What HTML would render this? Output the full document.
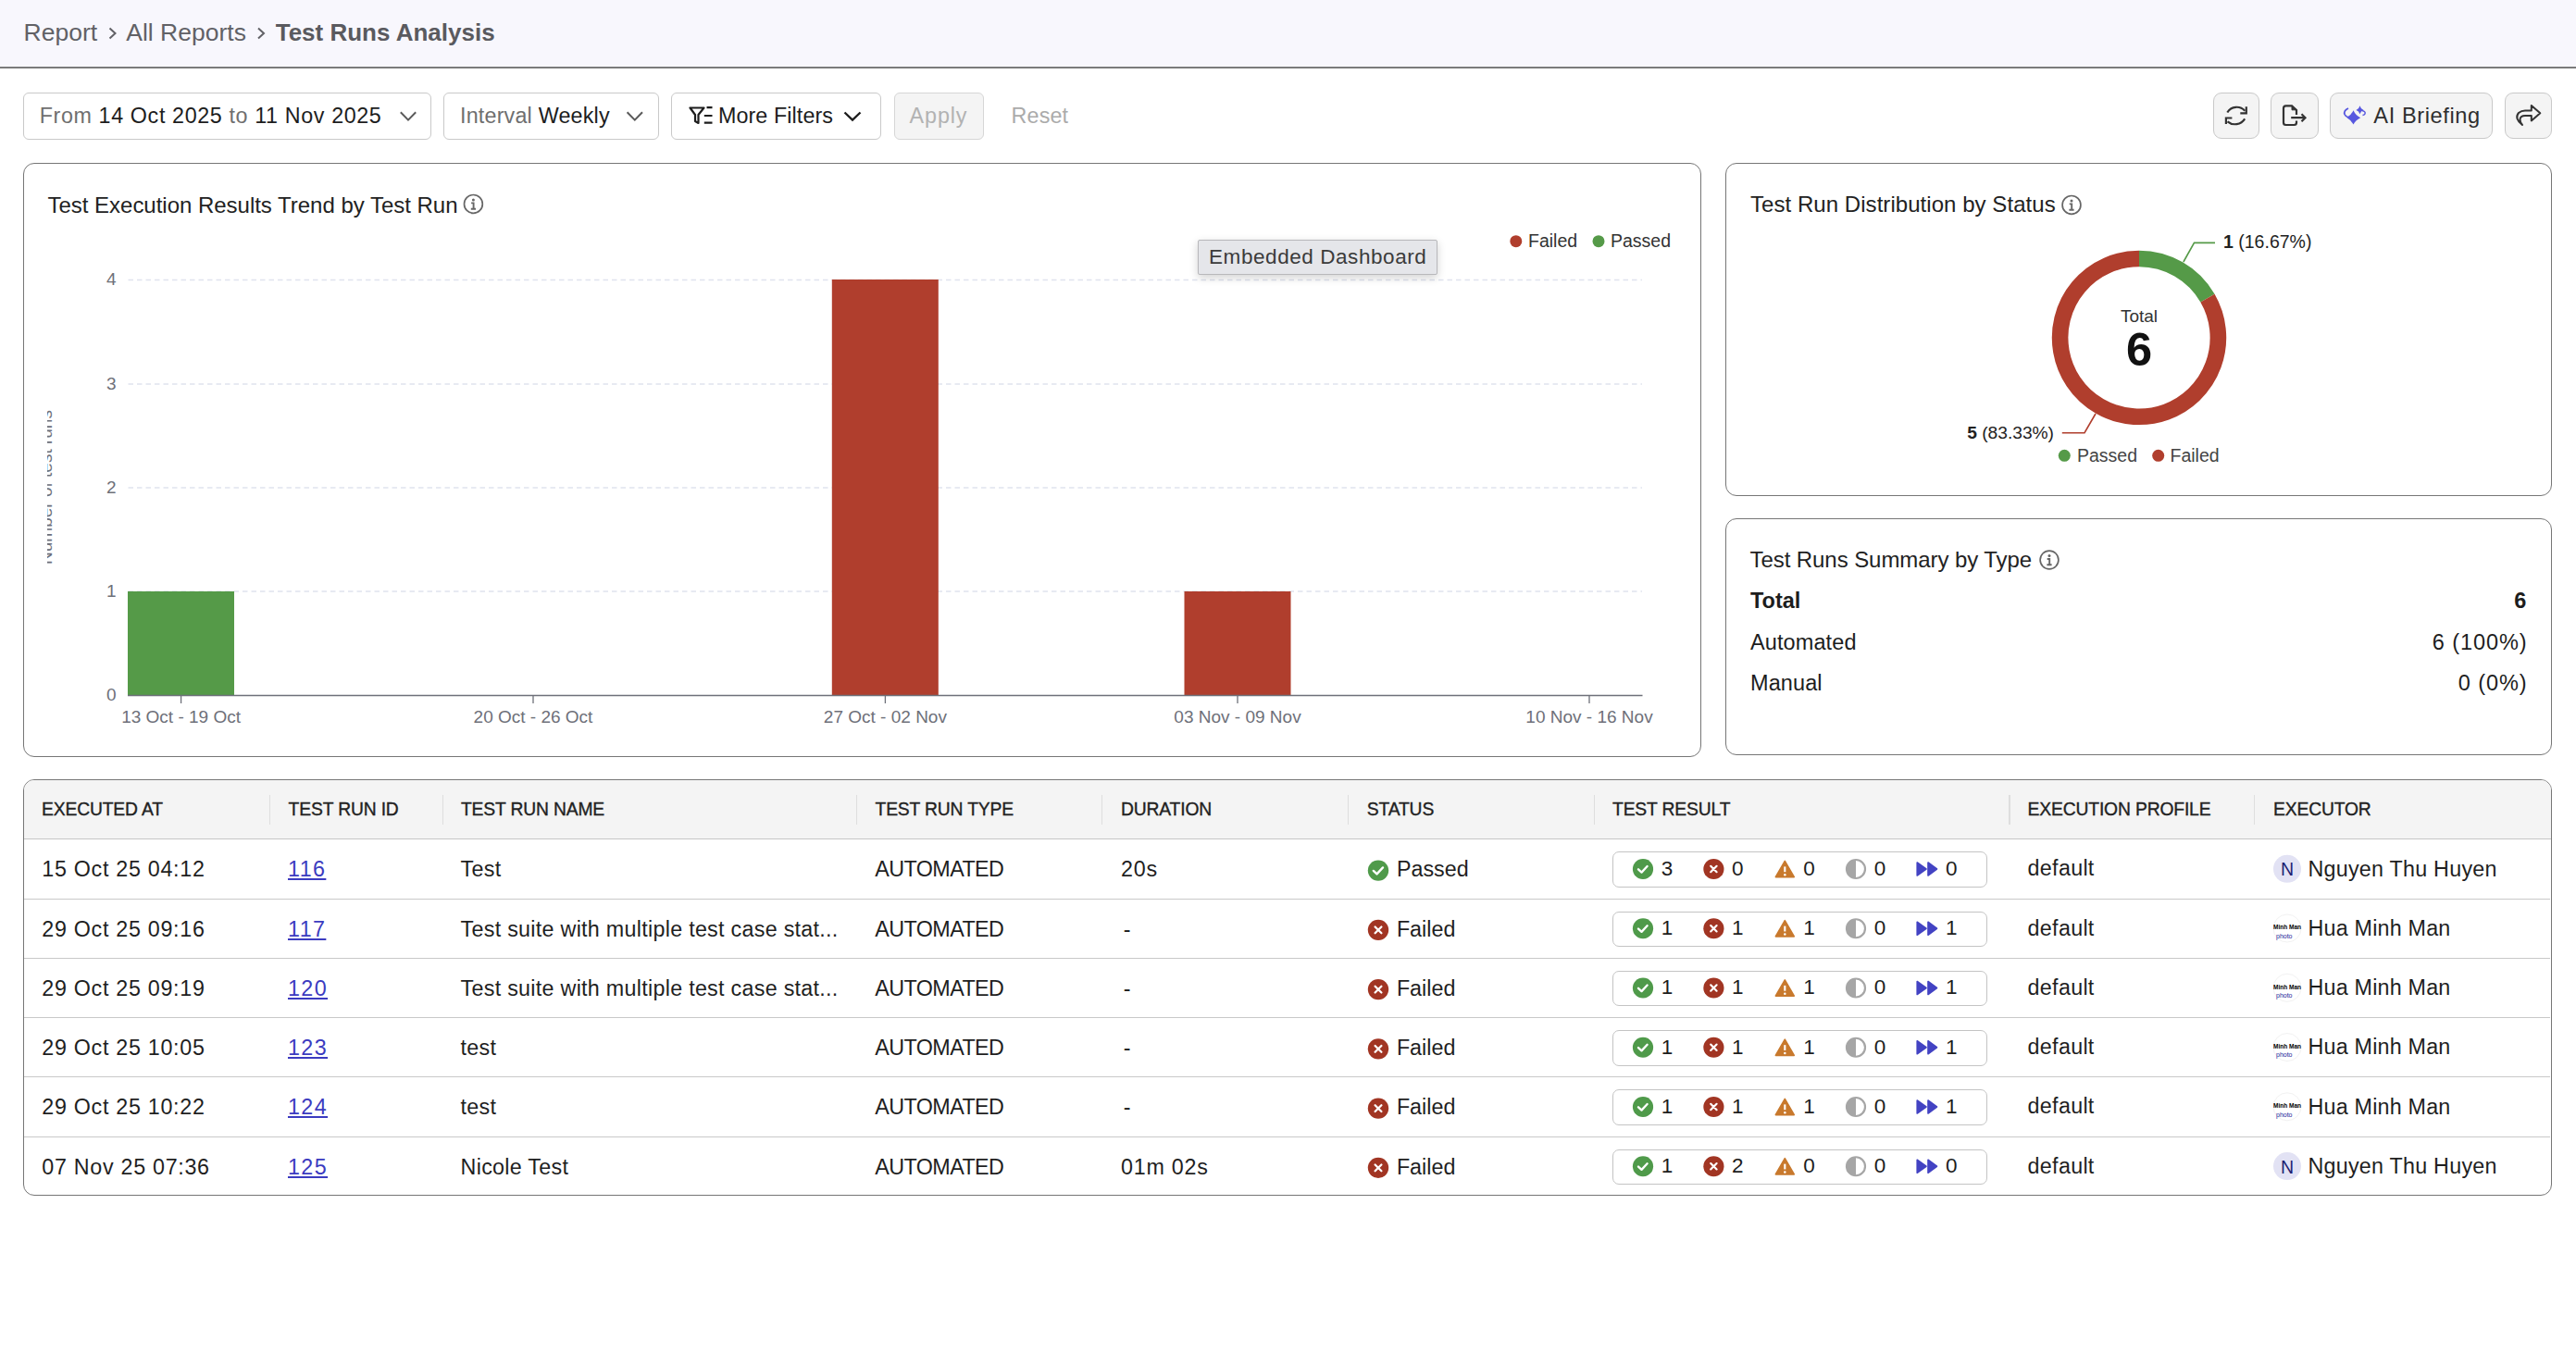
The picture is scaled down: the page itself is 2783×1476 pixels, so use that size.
<!DOCTYPE html>
<html><head><meta charset="utf-8"><title>Test Runs Analysis</title>
<style>
html,body{margin:0;padding:0;background:#fff;}
body{width:2783px;height:1476px;overflow:hidden;position:relative;font-family:"Liberation Sans",sans-serif;}
.t{position:absolute;white-space:nowrap;line-height:1;}
.b{position:absolute;box-sizing:border-box;}
svg.b{overflow:visible}
</style></head><body>
<div class="b" style="left:0;top:0;width:2783px;height:72px;background:#f8f7fd"></div>
<div class="b" style="left:0;top:72px;width:2783px;height:2px;background:#7b7b7b"></div>
<div class="t" style="left:25.60px;top:21.87px;font-size:26.5px;color:#616166;">Report</div>
<div class="t" style="left:136.30px;top:21.87px;font-size:26.5px;color:#616166;">All Reports</div>
<div class="t" style="left:297.70px;top:22.29px;font-size:26.0px;color:#5a5a5f;font-weight:700;">Test Runs Analysis</div>
<svg class="b" style="left:0;top:0" width="400" height="72"><polyline points="118.5,30.5 124.5,36 118.5,41.5" fill="none" stroke="#616166" stroke-width="2"/><polyline points="279,30.5 285,36 279,41.5" fill="none" stroke="#616166" stroke-width="2"/></svg>
<div class="b" style="left:25px;top:100px;width:441px;height:51px;background:#fff;border:1px solid #c9c9c9;border-radius:6px;"></div>
<div class="t" style="left:42.70px;top:113.98px;font-size:23.3px;color:#1d1d1d;letter-spacing:0.62px;"><span style="color:#6f6f6f">From</span> 14 Oct 2025 <span style="color:#6f6f6f">to</span> 11 Nov 2025</div>
<div class="b" style="left:479px;top:100px;width:233px;height:51px;background:#fff;border:1px solid #c9c9c9;border-radius:6px;"></div>
<div class="t" style="left:497.00px;top:113.98px;font-size:23.3px;color:#1d1d1d;letter-spacing:0.2px;"><span style="color:#6f6f6f">Interval</span> Weekly</div>
<div class="b" style="left:725px;top:100px;width:227px;height:51px;background:#fff;border:1px solid #c9c9c9;border-radius:6px;"></div>
<div class="t" style="left:775.90px;top:113.88px;font-size:23.3px;color:#1d1d1d;letter-spacing:0.1px;">More Filters</div>
<div class="b" style="left:966px;top:100px;width:97px;height:51px;background:#f4f4f4;border:1px solid #d6d6d6;border-radius:6px;"></div>
<div class="t" style="left:982.60px;top:113.98px;font-size:23.3px;color:#b2b2b2;letter-spacing:0.9px;">Apply</div>
<div class="t" style="left:1092.60px;top:113.98px;font-size:23.3px;color:#ababab;letter-spacing:0.15px;">Reset</div>
<svg class="b" style="left:0;top:90px" width="1000" height="70" viewBox="0 90 1000 70">
<polyline points="432.8,121.2 441,129.6 449.2,121.2" fill="none" stroke="#5a5a5a" stroke-width="2"/>
<polyline points="677.6,121.2 685.8,129.6 694,121.2" fill="none" stroke="#5a5a5a" stroke-width="2"/>
<polyline points="912.5,121.5 921,129.5 929.5,121.5" fill="none" stroke="#1d1d1d" stroke-width="2.4"/>
<path d="M745.5,116.5 L760.5,116.5 L754.5,124 L754.5,133 L751,131 L751,124 Z" fill="none" stroke="#1d1d1d" stroke-width="2.2" stroke-linejoin="round"/>
<path d="M763.5,116.2 H769.5 M760.8,125 H769.5 M760.8,132.6 H769.5" stroke="#1d1d1d" stroke-width="2.2"/>
</svg>
<div class="b" style="left:2391px;top:100px;width:50px;height:50px;background:#f4f4f4;border:1px solid #c9c9c9;border-radius:9px;"></div>
<div class="b" style="left:2453px;top:100px;width:52px;height:50px;background:#f4f4f4;border:1px solid #c9c9c9;border-radius:9px;"></div>
<div class="b" style="left:2517px;top:100px;width:176px;height:50px;background:#f4f4f4;border:1px solid #c9c9c9;border-radius:9px;"></div>
<div class="b" style="left:2706px;top:100px;width:51px;height:50px;background:#f4f4f4;border:1px solid #c9c9c9;border-radius:9px;"></div>
<div class="t" style="left:2564.30px;top:114.32px;font-size:23.6px;color:#2f2f2f;letter-spacing:0.6px;">AI Briefing</div>
<svg class="b" style="left:2380px;top:95px" width="400" height="60" viewBox="2380 95 400 60">
<path d="M2406.3,121.5 A11.8,11.8 0 0 1 2425.3,119.8" fill="none" stroke="#333" stroke-width="2.2"/>
<path d="M2426.8,115.3 V122.3 H2420.3" fill="none" stroke="#333" stroke-width="2.2"/>
<path d="M2425.2,128.3 A12.5,12.5 0 0 1 2406.5,131.3" fill="none" stroke="#333" stroke-width="2.2"/>
<path d="M2404.9,134 V127.5 H2411.4" fill="none" stroke="#333" stroke-width="2.2"/>
<path d="M2481,124 V119 L2476,114.3 H2469.5 Q2467,114.3 2467,117 V132.5 Q2467,135 2469.5,135 H2478.5 Q2481,135 2481,132.5 V130.5" fill="none" stroke="#333" stroke-width="2.2"/>
<path d="M2476,114.3 V118.8 H2481 Z" fill="#333" stroke="#333" stroke-width="1"/>
<path d="M2475.2,127.2 H2490 M2486.5,123.3 L2490.5,127.2 L2486.5,131.2" fill="none" stroke="#333" stroke-width="2.2"/>
<path d="M2542.5,119.3 Q2545,124.8 2550.2,127.3 Q2545,129.8 2542.5,134.6 Q2540,129.8 2535.3,127 Q2540,124.8 2542.5,119.3 Z" fill="#5757df"/>
<path d="M2549.5,114.3 Q2550.5,118 2553.5,119 Q2550.5,120 2549.5,123.3 Q2548.5,120 2545.5,119 Q2548.5,118 2549.5,114.3 Z" fill="#5757df"/>
<path d="M2537,117 Q2531.8,119.5 2533,123.5 Q2534,126 2537.5,127" fill="none" stroke="#5757df" stroke-width="1.8"/>
<path d="M2552,119.5 Q2556,120.5 2555,123 Q2554.5,124.3 2552.5,124.6" fill="none" stroke="#5757df" stroke-width="1.5"/>
<path d="M2725,135 Q2716,128 2721,122 Q2724,119.4 2728,119.4 H2734.8 V114 L2744.3,122.3 L2734.8,130.4 V125 H2728 Q2723,125 2722.5,129 Q2722.5,132 2725,135 Z" fill="none" stroke="#333" stroke-width="2" stroke-linejoin="round"/>
</svg>
<div class="b" style="left:25px;top:176px;width:1813px;height:642px;background:#fff;border:1px solid #767676;border-radius:12px;"></div>
<div class="b" style="left:1864px;top:176px;width:893px;height:360px;background:#fff;border:1px solid #767676;border-radius:12px;"></div>
<div class="b" style="left:1864px;top:560px;width:893px;height:256px;background:#fff;border:1px solid #767676;border-radius:12px;"></div>
<div class="t" style="left:51.50px;top:209.68px;font-size:24px;color:#222;letter-spacing:-0.02px;">Test Execution Results Trend by Test Run</div>
<div class="t" style="left:1891.00px;top:208.68px;font-size:24px;color:#222;letter-spacing:0.05px;">Test Run Distribution by Status</div>
<div class="t" style="left:1890.50px;top:593.18px;font-size:24px;color:#222;letter-spacing:-0.07px;">Test Runs Summary by Type</div>
<svg class="b" style="left:0;top:0" width="2783" height="840" viewBox="0 0 2783 840"><circle cx="511.4" cy="220.4" r="9.9" fill="none" stroke="#666" stroke-width="1.7"/><circle cx="511.4" cy="216.0" r="1.5" fill="#666"/><path d="M509.09999999999997,219.4 H511.59999999999997 V225.6 M508.79999999999995,225.70000000000002 H514.0" fill="none" stroke="#666" stroke-width="1.9"/><circle cx="2238" cy="221.4" r="9.9" fill="none" stroke="#666" stroke-width="1.7"/><circle cx="2238" cy="217.0" r="1.5" fill="#666"/><path d="M2235.7,220.4 H2238.2 V226.6 M2235.4,226.70000000000002 H2240.6" fill="none" stroke="#666" stroke-width="1.9"/><circle cx="2214" cy="605" r="9.9" fill="none" stroke="#666" stroke-width="1.7"/><circle cx="2214" cy="600.6" r="1.5" fill="#666"/><path d="M2211.7,604 H2214.2 V610.2 M2211.4,610.3 H2216.6" fill="none" stroke="#666" stroke-width="1.9"/><line x1="138.5" y1="302.5" x2="1774" y2="302.5" stroke="#e0e3ee" stroke-width="1.3" stroke-dasharray="5.5,4"/><line x1="138.5" y1="415" x2="1774" y2="415" stroke="#e0e3ee" stroke-width="1.3" stroke-dasharray="5.5,4"/><line x1="138.5" y1="527" x2="1774" y2="527" stroke="#e0e3ee" stroke-width="1.3" stroke-dasharray="5.5,4"/><line x1="138.5" y1="639" x2="1774" y2="639" stroke="#e0e3ee" stroke-width="1.3" stroke-dasharray="5.5,4"/><text x="125.5" y="308.3" text-anchor="end" font-size="19" fill="#6e7079">4</text><text x="125.5" y="420.8" text-anchor="end" font-size="19" fill="#6e7079">3</text><text x="125.5" y="532.8" text-anchor="end" font-size="19" fill="#6e7079">2</text><text x="125.5" y="644.8" text-anchor="end" font-size="19" fill="#6e7079">1</text><text x="125.5" y="757.3" text-anchor="end" font-size="19" fill="#6e7079">0</text><rect x="138" y="639" width="115" height="112.5" fill="#559a48"/><rect x="898.8" y="302" width="115" height="449.5" fill="#b03e2d"/><rect x="1279.5" y="639" width="115" height="112.5" fill="#b03e2d"/><line x1="138" y1="751.5" x2="1774.5" y2="751.5" stroke="#6e7079" stroke-width="1.6"/><line x1="195.6" y1="751" x2="195.6" y2="760" stroke="#6e7079" stroke-width="1.3"/><text x="195.6" y="780.8" text-anchor="middle" font-size="19" fill="#6e7079">13 Oct - 19 Oct</text><line x1="576" y1="751" x2="576" y2="760" stroke="#6e7079" stroke-width="1.3"/><text x="576" y="780.8" text-anchor="middle" font-size="19" fill="#6e7079">20 Oct - 26 Oct</text><line x1="956.4" y1="751" x2="956.4" y2="760" stroke="#6e7079" stroke-width="1.3"/><text x="956.4" y="780.8" text-anchor="middle" font-size="19" fill="#6e7079">27 Oct - 02 Nov</text><line x1="1337" y1="751" x2="1337" y2="760" stroke="#6e7079" stroke-width="1.3"/><text x="1337" y="780.8" text-anchor="middle" font-size="19" fill="#6e7079">03 Nov - 09 Nov</text><line x1="1717" y1="751" x2="1717" y2="760" stroke="#6e7079" stroke-width="1.3"/><text x="1717" y="780.8" text-anchor="middle" font-size="19" fill="#6e7079">10 Nov - 16 Nov</text><circle cx="1637.8" cy="260.7" r="6.5" fill="#b03e2d"/><text x="1651" y="267" font-size="19.5" fill="#333">Failed</text><circle cx="1727" cy="260.7" r="6.5" fill="#559a48"/><text x="1740" y="267" font-size="19.5" fill="#333">Passed</text></svg>
<div class="b" style="left:50.5px;top:420px;width:30px;height:220px;overflow:hidden"><div style="position:absolute;left:-87px;top:96.8px;width:170px;height:19px;line-height:19px;font-size:19px;color:#6e7079;white-space:nowrap;text-align:center;transform:rotate(-90deg)">Number of test runs</div></div>
<div class="b" style="left:1294px;top:259px;width:259px;height:38px;background:#e5e6ea;border:1px solid #b8b8bb;border-radius:2px;box-shadow:0 3px 10px rgba(0,0,0,0.18)"></div>
<div class="t" style="left:1306.00px;top:267.45px;font-size:22.5px;color:#3b3b3b;letter-spacing:0.57px;">Embedded Dashboard</div>
<svg class="b" style="left:1864px;top:176px" width="893" height="360" viewBox="1864 176 893 360"><path d="M2311.00,279.50 A85.4,85.4 0 0 1 2384.96,322.20" fill="none" stroke="#559a48" stroke-width="17.6"/><path d="M2384.96,322.20 A85.4,85.4 0 1 1 2311.00,279.50" fill="none" stroke="#b03e2d" stroke-width="17.6"/><polyline points="2358.9,283 2370.5,262.4 2393,262.4" fill="none" stroke="#559a48" stroke-width="1.6"/><polyline points="2264,447 2252,467.7 2227.8,467.7" fill="none" stroke="#b03e2d" stroke-width="1.6"/><text x="2402" y="268" font-size="19.5" fill="#222"><tspan font-weight="700">1</tspan> (16.67%)</text><text x="2219" y="474" font-size="19.2" fill="#222" text-anchor="end"><tspan font-weight="700">5</tspan> (83.33%)</text><text x="2311" y="348" font-size="19" fill="#333" text-anchor="middle">Total</text><text x="2311" y="394.6" font-size="50.5" font-weight="700" fill="#111" text-anchor="middle">6</text><circle cx="2230.3" cy="492.3" r="6.5" fill="#559a48"/><text x="2244" y="499" font-size="19.5" fill="#444">Passed</text><circle cx="2331.7" cy="492.3" r="6.5" fill="#b03e2d"/><text x="2344.5" y="499" font-size="19.5" fill="#444">Failed</text></svg>
<div class="t" style="left:1891.00px;top:637.71px;font-size:23.5px;color:#1d1d1d;font-weight:700;">Total</div>
<div class="t" style="right:53.60px;top:637.71px;font-size:23.5px;color:#1d1d1d;font-weight:700;">6</div>
<div class="t" style="left:1891.00px;top:682.71px;font-size:23.5px;color:#1d1d1d;letter-spacing:0.1px;">Automated</div>
<div class="t" style="right:52.60px;top:682.71px;font-size:23.5px;color:#1d1d1d;letter-spacing:0.9px;">6 (100%)</div>
<div class="t" style="left:1891.00px;top:726.91px;font-size:23.5px;color:#1d1d1d;letter-spacing:0.1px;">Manual</div>
<div class="t" style="right:52.60px;top:726.91px;font-size:23.5px;color:#1d1d1d;letter-spacing:0.9px;">0 (0%)</div>
<div class="b" style="left:25px;top:842px;width:2732px;height:450px;border:1px solid #767676;border-radius:12px;overflow:hidden;background:#fff"><div style="position:absolute;left:0;top:0;right:0;height:63px;background:#f4f4f4;border-bottom:1px solid #c6c6c6"></div></div>
<div class="b" style="left:291.2px;top:858.5px;width:1.3px;height:32px;background:#dedede"></div>
<div class="b" style="left:477.5px;top:858.5px;width:1.3px;height:32px;background:#dedede"></div>
<div class="b" style="left:925.2px;top:858.5px;width:1.3px;height:32px;background:#dedede"></div>
<div class="b" style="left:1190.2px;top:858.5px;width:1.3px;height:32px;background:#dedede"></div>
<div class="b" style="left:1456.2px;top:858.5px;width:1.3px;height:32px;background:#dedede"></div>
<div class="b" style="left:1722.0px;top:858.5px;width:1.3px;height:32px;background:#dedede"></div>
<div class="b" style="left:2170.4px;top:858.5px;width:1.3px;height:32px;background:#dedede"></div>
<div class="b" style="left:2435.2px;top:858.5px;width:1.3px;height:32px;background:#dedede"></div>
<div class="t" style="left:45.00px;top:865.26px;font-size:19.3px;color:#222;letter-spacing:-0.15px;-webkit-text-stroke:0.35px #222;">EXECUTED AT</div>
<div class="t" style="left:311.60px;top:865.26px;font-size:19.3px;color:#222;letter-spacing:-0.15px;-webkit-text-stroke:0.35px #222;">TEST RUN ID</div>
<div class="t" style="left:497.90px;top:865.26px;font-size:19.3px;color:#222;letter-spacing:-0.15px;-webkit-text-stroke:0.35px #222;">TEST RUN NAME</div>
<div class="t" style="left:945.50px;top:865.26px;font-size:19.3px;color:#222;letter-spacing:-0.15px;-webkit-text-stroke:0.35px #222;">TEST RUN TYPE</div>
<div class="t" style="left:1211.00px;top:865.26px;font-size:19.3px;color:#222;letter-spacing:-0.15px;-webkit-text-stroke:0.35px #222;">DURATION</div>
<div class="t" style="left:1476.80px;top:865.26px;font-size:19.3px;color:#222;letter-spacing:-0.15px;-webkit-text-stroke:0.35px #222;">STATUS</div>
<div class="t" style="left:1742.00px;top:865.26px;font-size:19.3px;color:#222;letter-spacing:-0.15px;-webkit-text-stroke:0.35px #222;">TEST RESULT</div>
<div class="t" style="left:2190.60px;top:865.26px;font-size:19.3px;color:#222;letter-spacing:-0.15px;-webkit-text-stroke:0.35px #222;">EXECUTION PROFILE</div>
<div class="t" style="left:2456.00px;top:865.26px;font-size:19.3px;color:#222;letter-spacing:-0.15px;-webkit-text-stroke:0.35px #222;">EXECUTOR</div>
<div class="b" style="left:26px;top:970.55px;width:2729px;height:1.2px;background:#c9c9c9"></div>
<div class="t" style="left:45.30px;top:928.28px;font-size:23.3px;color:#1f1f1f;letter-spacing:0.7px;">15 Oct 25 04:12</div>
<div class="t" style="left:311.00px;top:928.28px;font-size:23.3px;color:#3b3bc0;letter-spacing:1.4px;text-decoration:underline;text-underline-offset:1.5px;text-decoration-thickness:1.5px;">116</div>
<div class="t" style="left:497.60px;top:928.28px;font-size:23.3px;color:#1f1f1f;letter-spacing:0.28px;">Test</div>
<div class="t" style="left:945.20px;top:928.28px;font-size:23.3px;color:#1f1f1f;letter-spacing:-0.55px;">AUTOMATED</div>
<div class="t" style="left:1211.00px;top:928.28px;font-size:23.3px;color:#1f1f1f;letter-spacing:0.75px;">20s</div>
<div class="t" style="left:1508.90px;top:928.28px;font-size:23.3px;color:#1f1f1f;">Passed</div>
<div class="b" style="left:1742px;top:920.30px;width:405px;height:38.5px;border:1px solid #c4c4c4;border-radius:7px"></div>
<div class="t" style="left:1794.70px;top:927.85px;font-size:22.5px;color:#1d1d1d;">3</div>
<div class="t" style="left:1871.00px;top:927.85px;font-size:22.5px;color:#1d1d1d;">0</div>
<div class="t" style="left:1948.30px;top:927.85px;font-size:22.5px;color:#1d1d1d;">0</div>
<div class="t" style="left:2024.70px;top:927.85px;font-size:22.5px;color:#1d1d1d;">0</div>
<div class="t" style="left:2101.90px;top:927.85px;font-size:22.5px;color:#1d1d1d;">0</div>
<div class="t" style="left:2190.60px;top:927.48px;font-size:23.3px;color:#1f1f1f;letter-spacing:0.3px;">default</div>
<div class="t" style="left:2493.40px;top:927.68px;font-size:23.3px;color:#1f1f1f;letter-spacing:0.25px;">Nguyen Thu Huyen</div>
<div class="b" style="left:26px;top:1034.80px;width:2729px;height:1.2px;background:#c9c9c9"></div>
<div class="t" style="left:45.30px;top:992.53px;font-size:23.3px;color:#1f1f1f;letter-spacing:0.7px;">29 Oct 25 09:16</div>
<div class="t" style="left:311.00px;top:992.53px;font-size:23.3px;color:#3b3bc0;letter-spacing:1.4px;text-decoration:underline;text-underline-offset:1.5px;text-decoration-thickness:1.5px;">117</div>
<div class="t" style="left:497.60px;top:992.53px;font-size:23.3px;color:#1f1f1f;letter-spacing:0.28px;">Test suite with multiple test case stat...</div>
<div class="t" style="left:945.20px;top:992.53px;font-size:23.3px;color:#1f1f1f;letter-spacing:-0.55px;">AUTOMATED</div>
<div class="t" style="left:1213.80px;top:992.53px;font-size:23.3px;color:#1f1f1f;letter-spacing:0.75px;">-</div>
<div class="t" style="left:1508.90px;top:992.53px;font-size:23.3px;color:#1f1f1f;">Failed</div>
<div class="b" style="left:1742px;top:984.55px;width:405px;height:38.5px;border:1px solid #c4c4c4;border-radius:7px"></div>
<div class="t" style="left:1794.70px;top:992.10px;font-size:22.5px;color:#1d1d1d;">1</div>
<div class="t" style="left:1871.00px;top:992.10px;font-size:22.5px;color:#1d1d1d;">1</div>
<div class="t" style="left:1948.30px;top:992.10px;font-size:22.5px;color:#1d1d1d;">1</div>
<div class="t" style="left:2024.70px;top:992.10px;font-size:22.5px;color:#1d1d1d;">0</div>
<div class="t" style="left:2101.90px;top:992.10px;font-size:22.5px;color:#1d1d1d;">1</div>
<div class="t" style="left:2190.60px;top:991.73px;font-size:23.3px;color:#1f1f1f;letter-spacing:0.3px;">default</div>
<div class="t" style="left:2493.60px;top:991.93px;font-size:23.3px;color:#1f1f1f;letter-spacing:0.2px;">Hua Minh Man</div>
<div class="b" style="left:26px;top:1099.05px;width:2729px;height:1.2px;background:#c9c9c9"></div>
<div class="t" style="left:45.30px;top:1056.78px;font-size:23.3px;color:#1f1f1f;letter-spacing:0.7px;">29 Oct 25 09:19</div>
<div class="t" style="left:311.00px;top:1056.78px;font-size:23.3px;color:#3b3bc0;letter-spacing:1.4px;text-decoration:underline;text-underline-offset:1.5px;text-decoration-thickness:1.5px;">120</div>
<div class="t" style="left:497.60px;top:1056.78px;font-size:23.3px;color:#1f1f1f;letter-spacing:0.28px;">Test suite with multiple test case stat...</div>
<div class="t" style="left:945.20px;top:1056.78px;font-size:23.3px;color:#1f1f1f;letter-spacing:-0.55px;">AUTOMATED</div>
<div class="t" style="left:1213.80px;top:1056.78px;font-size:23.3px;color:#1f1f1f;letter-spacing:0.75px;">-</div>
<div class="t" style="left:1508.90px;top:1056.78px;font-size:23.3px;color:#1f1f1f;">Failed</div>
<div class="b" style="left:1742px;top:1048.80px;width:405px;height:38.5px;border:1px solid #c4c4c4;border-radius:7px"></div>
<div class="t" style="left:1794.70px;top:1056.35px;font-size:22.5px;color:#1d1d1d;">1</div>
<div class="t" style="left:1871.00px;top:1056.35px;font-size:22.5px;color:#1d1d1d;">1</div>
<div class="t" style="left:1948.30px;top:1056.35px;font-size:22.5px;color:#1d1d1d;">1</div>
<div class="t" style="left:2024.70px;top:1056.35px;font-size:22.5px;color:#1d1d1d;">0</div>
<div class="t" style="left:2101.90px;top:1056.35px;font-size:22.5px;color:#1d1d1d;">1</div>
<div class="t" style="left:2190.60px;top:1055.98px;font-size:23.3px;color:#1f1f1f;letter-spacing:0.3px;">default</div>
<div class="t" style="left:2493.60px;top:1056.18px;font-size:23.3px;color:#1f1f1f;letter-spacing:0.2px;">Hua Minh Man</div>
<div class="b" style="left:26px;top:1163.30px;width:2729px;height:1.2px;background:#c9c9c9"></div>
<div class="t" style="left:45.30px;top:1121.03px;font-size:23.3px;color:#1f1f1f;letter-spacing:0.7px;">29 Oct 25 10:05</div>
<div class="t" style="left:311.00px;top:1121.03px;font-size:23.3px;color:#3b3bc0;letter-spacing:1.4px;text-decoration:underline;text-underline-offset:1.5px;text-decoration-thickness:1.5px;">123</div>
<div class="t" style="left:497.60px;top:1121.03px;font-size:23.3px;color:#1f1f1f;letter-spacing:0.28px;">test</div>
<div class="t" style="left:945.20px;top:1121.03px;font-size:23.3px;color:#1f1f1f;letter-spacing:-0.55px;">AUTOMATED</div>
<div class="t" style="left:1213.80px;top:1121.03px;font-size:23.3px;color:#1f1f1f;letter-spacing:0.75px;">-</div>
<div class="t" style="left:1508.90px;top:1121.03px;font-size:23.3px;color:#1f1f1f;">Failed</div>
<div class="b" style="left:1742px;top:1113.05px;width:405px;height:38.5px;border:1px solid #c4c4c4;border-radius:7px"></div>
<div class="t" style="left:1794.70px;top:1120.60px;font-size:22.5px;color:#1d1d1d;">1</div>
<div class="t" style="left:1871.00px;top:1120.60px;font-size:22.5px;color:#1d1d1d;">1</div>
<div class="t" style="left:1948.30px;top:1120.60px;font-size:22.5px;color:#1d1d1d;">1</div>
<div class="t" style="left:2024.70px;top:1120.60px;font-size:22.5px;color:#1d1d1d;">0</div>
<div class="t" style="left:2101.90px;top:1120.60px;font-size:22.5px;color:#1d1d1d;">1</div>
<div class="t" style="left:2190.60px;top:1120.23px;font-size:23.3px;color:#1f1f1f;letter-spacing:0.3px;">default</div>
<div class="t" style="left:2493.60px;top:1120.43px;font-size:23.3px;color:#1f1f1f;letter-spacing:0.2px;">Hua Minh Man</div>
<div class="b" style="left:26px;top:1227.55px;width:2729px;height:1.2px;background:#c9c9c9"></div>
<div class="t" style="left:45.30px;top:1185.28px;font-size:23.3px;color:#1f1f1f;letter-spacing:0.7px;">29 Oct 25 10:22</div>
<div class="t" style="left:311.00px;top:1185.28px;font-size:23.3px;color:#3b3bc0;letter-spacing:1.4px;text-decoration:underline;text-underline-offset:1.5px;text-decoration-thickness:1.5px;">124</div>
<div class="t" style="left:497.60px;top:1185.28px;font-size:23.3px;color:#1f1f1f;letter-spacing:0.28px;">test</div>
<div class="t" style="left:945.20px;top:1185.28px;font-size:23.3px;color:#1f1f1f;letter-spacing:-0.55px;">AUTOMATED</div>
<div class="t" style="left:1213.80px;top:1185.28px;font-size:23.3px;color:#1f1f1f;letter-spacing:0.75px;">-</div>
<div class="t" style="left:1508.90px;top:1185.28px;font-size:23.3px;color:#1f1f1f;">Failed</div>
<div class="b" style="left:1742px;top:1177.30px;width:405px;height:38.5px;border:1px solid #c4c4c4;border-radius:7px"></div>
<div class="t" style="left:1794.70px;top:1184.85px;font-size:22.5px;color:#1d1d1d;">1</div>
<div class="t" style="left:1871.00px;top:1184.85px;font-size:22.5px;color:#1d1d1d;">1</div>
<div class="t" style="left:1948.30px;top:1184.85px;font-size:22.5px;color:#1d1d1d;">1</div>
<div class="t" style="left:2024.70px;top:1184.85px;font-size:22.5px;color:#1d1d1d;">0</div>
<div class="t" style="left:2101.90px;top:1184.85px;font-size:22.5px;color:#1d1d1d;">1</div>
<div class="t" style="left:2190.60px;top:1184.48px;font-size:23.3px;color:#1f1f1f;letter-spacing:0.3px;">default</div>
<div class="t" style="left:2493.60px;top:1184.68px;font-size:23.3px;color:#1f1f1f;letter-spacing:0.2px;">Hua Minh Man</div>
<div class="t" style="left:45.30px;top:1249.53px;font-size:23.3px;color:#1f1f1f;letter-spacing:0.7px;">07 Nov 25 07:36</div>
<div class="t" style="left:311.00px;top:1249.53px;font-size:23.3px;color:#3b3bc0;letter-spacing:1.4px;text-decoration:underline;text-underline-offset:1.5px;text-decoration-thickness:1.5px;">125</div>
<div class="t" style="left:497.60px;top:1249.53px;font-size:23.3px;color:#1f1f1f;letter-spacing:0.28px;">Nicole Test</div>
<div class="t" style="left:945.20px;top:1249.53px;font-size:23.3px;color:#1f1f1f;letter-spacing:-0.55px;">AUTOMATED</div>
<div class="t" style="left:1211.00px;top:1249.53px;font-size:23.3px;color:#1f1f1f;letter-spacing:0.75px;">01m 02s</div>
<div class="t" style="left:1508.90px;top:1249.53px;font-size:23.3px;color:#1f1f1f;">Failed</div>
<div class="b" style="left:1742px;top:1241.55px;width:405px;height:38.5px;border:1px solid #c4c4c4;border-radius:7px"></div>
<div class="t" style="left:1794.70px;top:1249.10px;font-size:22.5px;color:#1d1d1d;">1</div>
<div class="t" style="left:1871.00px;top:1249.10px;font-size:22.5px;color:#1d1d1d;">2</div>
<div class="t" style="left:1948.30px;top:1249.10px;font-size:22.5px;color:#1d1d1d;">0</div>
<div class="t" style="left:2024.70px;top:1249.10px;font-size:22.5px;color:#1d1d1d;">0</div>
<div class="t" style="left:2101.90px;top:1249.10px;font-size:22.5px;color:#1d1d1d;">0</div>
<div class="t" style="left:2190.60px;top:1248.73px;font-size:23.3px;color:#1f1f1f;letter-spacing:0.3px;">default</div>
<div class="t" style="left:2493.40px;top:1248.93px;font-size:23.3px;color:#1f1f1f;letter-spacing:0.25px;">Nguyen Thu Huyen</div>
<svg class="b" style="left:0;top:900px" width="2783" height="400" viewBox="0 900 2783 400"><circle cx="1489" cy="940.60" r="11.2" fill="#4f9a4a"/><path d="M1483.8,940.90 L1487.5,944.40 L1494,937.40" fill="none" stroke="#fff" stroke-width="2.4" stroke-linecap="round" stroke-linejoin="round"/><circle cx="1775" cy="939.00" r="11.1" fill="#4f9a4a"/><path d="M1770,939.30 L1773.5,942.60 L1779.6,936.00" fill="none" stroke="#fff" stroke-width="2.3" stroke-linecap="round" stroke-linejoin="round"/><circle cx="1851.4" cy="939.00" r="11.1" fill="#a13523"/><path d="M1848.2,935.80 L1854.6,942.20 M1854.6,935.80 L1848.2,942.20" fill="none" stroke="#fff" stroke-width="2.2" stroke-linecap="round"/><path d="M1928.3,930.40 L1938.3,947.60 H1918.3 Z" fill="#c8792d" stroke="#c8792d" stroke-width="1.6" stroke-linejoin="round"/><path d="M1928.3,936.40 V942.20" stroke="#fff" stroke-width="2.1"/><circle cx="1928.3" cy="945.20" r="1.25" fill="#fff"/><circle cx="2005" cy="939.00" r="10" fill="none" stroke="#a6a6a6" stroke-width="2.2"/><path d="M2005,929.00 A10,10 0 0 0 2005,949.00 Z" fill="#a6a6a6"/><path d="M2071.2,932.00 L2081,939.00 L2071.2,946.00 Z M2083,932.00 L2092.5,939.00 L2083,946.00 Z" fill="#4343c3" stroke="#4343c3" stroke-width="1.6" stroke-linejoin="round"/><circle cx="2471" cy="938.80" r="15" fill="#e2e2f4"/><text x="2471" y="946.30" font-size="19.5" fill="#1c1f73" text-anchor="middle">N</text><circle cx="1489" cy="1004.85" r="11.2" fill="#a13523"/><path d="M1485.6,1001.45 L1492.4,1008.25 M1492.4,1001.45 L1485.6,1008.25" fill="none" stroke="#fff" stroke-width="2.3" stroke-linecap="round"/><circle cx="1775" cy="1003.25" r="11.1" fill="#4f9a4a"/><path d="M1770,1003.55 L1773.5,1006.85 L1779.6,1000.25" fill="none" stroke="#fff" stroke-width="2.3" stroke-linecap="round" stroke-linejoin="round"/><circle cx="1851.4" cy="1003.25" r="11.1" fill="#a13523"/><path d="M1848.2,1000.05 L1854.6,1006.45 M1854.6,1000.05 L1848.2,1006.45" fill="none" stroke="#fff" stroke-width="2.2" stroke-linecap="round"/><path d="M1928.3,994.65 L1938.3,1011.85 H1918.3 Z" fill="#c8792d" stroke="#c8792d" stroke-width="1.6" stroke-linejoin="round"/><path d="M1928.3,1000.65 V1006.45" stroke="#fff" stroke-width="2.1"/><circle cx="1928.3" cy="1009.45" r="1.25" fill="#fff"/><circle cx="2005" cy="1003.25" r="10" fill="none" stroke="#a6a6a6" stroke-width="2.2"/><path d="M2005,993.25 A10,10 0 0 0 2005,1013.25 Z" fill="#a6a6a6"/><path d="M2071.2,996.25 L2081,1003.25 L2071.2,1010.25 Z M2083,996.25 L2092.5,1003.25 L2083,1010.25 Z" fill="#4343c3" stroke="#4343c3" stroke-width="1.6" stroke-linejoin="round"/><circle cx="2471" cy="1003.05" r="15" fill="none" stroke="#f2f2f2" stroke-width="1"/><text x="2456" y="1004.35" font-size="8" fill="#000" font-weight="700" textLength="30" lengthAdjust="spacingAndGlyphs">Minh Man</text><text x="2459" y="1013.85" font-size="7" fill="#23239a">photo</text><circle cx="1489" cy="1069.10" r="11.2" fill="#a13523"/><path d="M1485.6,1065.70 L1492.4,1072.50 M1492.4,1065.70 L1485.6,1072.50" fill="none" stroke="#fff" stroke-width="2.3" stroke-linecap="round"/><circle cx="1775" cy="1067.50" r="11.1" fill="#4f9a4a"/><path d="M1770,1067.80 L1773.5,1071.10 L1779.6,1064.50" fill="none" stroke="#fff" stroke-width="2.3" stroke-linecap="round" stroke-linejoin="round"/><circle cx="1851.4" cy="1067.50" r="11.1" fill="#a13523"/><path d="M1848.2,1064.30 L1854.6,1070.70 M1854.6,1064.30 L1848.2,1070.70" fill="none" stroke="#fff" stroke-width="2.2" stroke-linecap="round"/><path d="M1928.3,1058.90 L1938.3,1076.10 H1918.3 Z" fill="#c8792d" stroke="#c8792d" stroke-width="1.6" stroke-linejoin="round"/><path d="M1928.3,1064.90 V1070.70" stroke="#fff" stroke-width="2.1"/><circle cx="1928.3" cy="1073.70" r="1.25" fill="#fff"/><circle cx="2005" cy="1067.50" r="10" fill="none" stroke="#a6a6a6" stroke-width="2.2"/><path d="M2005,1057.50 A10,10 0 0 0 2005,1077.50 Z" fill="#a6a6a6"/><path d="M2071.2,1060.50 L2081,1067.50 L2071.2,1074.50 Z M2083,1060.50 L2092.5,1067.50 L2083,1074.50 Z" fill="#4343c3" stroke="#4343c3" stroke-width="1.6" stroke-linejoin="round"/><circle cx="2471" cy="1067.30" r="15" fill="none" stroke="#f2f2f2" stroke-width="1"/><text x="2456" y="1068.60" font-size="8" fill="#000" font-weight="700" textLength="30" lengthAdjust="spacingAndGlyphs">Minh Man</text><text x="2459" y="1078.10" font-size="7" fill="#23239a">photo</text><circle cx="1489" cy="1133.35" r="11.2" fill="#a13523"/><path d="M1485.6,1129.95 L1492.4,1136.75 M1492.4,1129.95 L1485.6,1136.75" fill="none" stroke="#fff" stroke-width="2.3" stroke-linecap="round"/><circle cx="1775" cy="1131.75" r="11.1" fill="#4f9a4a"/><path d="M1770,1132.05 L1773.5,1135.35 L1779.6,1128.75" fill="none" stroke="#fff" stroke-width="2.3" stroke-linecap="round" stroke-linejoin="round"/><circle cx="1851.4" cy="1131.75" r="11.1" fill="#a13523"/><path d="M1848.2,1128.55 L1854.6,1134.95 M1854.6,1128.55 L1848.2,1134.95" fill="none" stroke="#fff" stroke-width="2.2" stroke-linecap="round"/><path d="M1928.3,1123.15 L1938.3,1140.35 H1918.3 Z" fill="#c8792d" stroke="#c8792d" stroke-width="1.6" stroke-linejoin="round"/><path d="M1928.3,1129.15 V1134.95" stroke="#fff" stroke-width="2.1"/><circle cx="1928.3" cy="1137.95" r="1.25" fill="#fff"/><circle cx="2005" cy="1131.75" r="10" fill="none" stroke="#a6a6a6" stroke-width="2.2"/><path d="M2005,1121.75 A10,10 0 0 0 2005,1141.75 Z" fill="#a6a6a6"/><path d="M2071.2,1124.75 L2081,1131.75 L2071.2,1138.75 Z M2083,1124.75 L2092.5,1131.75 L2083,1138.75 Z" fill="#4343c3" stroke="#4343c3" stroke-width="1.6" stroke-linejoin="round"/><circle cx="2471" cy="1131.55" r="15" fill="none" stroke="#f2f2f2" stroke-width="1"/><text x="2456" y="1132.85" font-size="8" fill="#000" font-weight="700" textLength="30" lengthAdjust="spacingAndGlyphs">Minh Man</text><text x="2459" y="1142.35" font-size="7" fill="#23239a">photo</text><circle cx="1489" cy="1197.60" r="11.2" fill="#a13523"/><path d="M1485.6,1194.20 L1492.4,1201.00 M1492.4,1194.20 L1485.6,1201.00" fill="none" stroke="#fff" stroke-width="2.3" stroke-linecap="round"/><circle cx="1775" cy="1196.00" r="11.1" fill="#4f9a4a"/><path d="M1770,1196.30 L1773.5,1199.60 L1779.6,1193.00" fill="none" stroke="#fff" stroke-width="2.3" stroke-linecap="round" stroke-linejoin="round"/><circle cx="1851.4" cy="1196.00" r="11.1" fill="#a13523"/><path d="M1848.2,1192.80 L1854.6,1199.20 M1854.6,1192.80 L1848.2,1199.20" fill="none" stroke="#fff" stroke-width="2.2" stroke-linecap="round"/><path d="M1928.3,1187.40 L1938.3,1204.60 H1918.3 Z" fill="#c8792d" stroke="#c8792d" stroke-width="1.6" stroke-linejoin="round"/><path d="M1928.3,1193.40 V1199.20" stroke="#fff" stroke-width="2.1"/><circle cx="1928.3" cy="1202.20" r="1.25" fill="#fff"/><circle cx="2005" cy="1196.00" r="10" fill="none" stroke="#a6a6a6" stroke-width="2.2"/><path d="M2005,1186.00 A10,10 0 0 0 2005,1206.00 Z" fill="#a6a6a6"/><path d="M2071.2,1189.00 L2081,1196.00 L2071.2,1203.00 Z M2083,1189.00 L2092.5,1196.00 L2083,1203.00 Z" fill="#4343c3" stroke="#4343c3" stroke-width="1.6" stroke-linejoin="round"/><circle cx="2471" cy="1195.80" r="15" fill="none" stroke="#f2f2f2" stroke-width="1"/><text x="2456" y="1197.10" font-size="8" fill="#000" font-weight="700" textLength="30" lengthAdjust="spacingAndGlyphs">Minh Man</text><text x="2459" y="1206.60" font-size="7" fill="#23239a">photo</text><circle cx="1489" cy="1261.85" r="11.2" fill="#a13523"/><path d="M1485.6,1258.45 L1492.4,1265.25 M1492.4,1258.45 L1485.6,1265.25" fill="none" stroke="#fff" stroke-width="2.3" stroke-linecap="round"/><circle cx="1775" cy="1260.25" r="11.1" fill="#4f9a4a"/><path d="M1770,1260.55 L1773.5,1263.85 L1779.6,1257.25" fill="none" stroke="#fff" stroke-width="2.3" stroke-linecap="round" stroke-linejoin="round"/><circle cx="1851.4" cy="1260.25" r="11.1" fill="#a13523"/><path d="M1848.2,1257.05 L1854.6,1263.45 M1854.6,1257.05 L1848.2,1263.45" fill="none" stroke="#fff" stroke-width="2.2" stroke-linecap="round"/><path d="M1928.3,1251.65 L1938.3,1268.85 H1918.3 Z" fill="#c8792d" stroke="#c8792d" stroke-width="1.6" stroke-linejoin="round"/><path d="M1928.3,1257.65 V1263.45" stroke="#fff" stroke-width="2.1"/><circle cx="1928.3" cy="1266.45" r="1.25" fill="#fff"/><circle cx="2005" cy="1260.25" r="10" fill="none" stroke="#a6a6a6" stroke-width="2.2"/><path d="M2005,1250.25 A10,10 0 0 0 2005,1270.25 Z" fill="#a6a6a6"/><path d="M2071.2,1253.25 L2081,1260.25 L2071.2,1267.25 Z M2083,1253.25 L2092.5,1260.25 L2083,1267.25 Z" fill="#4343c3" stroke="#4343c3" stroke-width="1.6" stroke-linejoin="round"/><circle cx="2471" cy="1260.05" r="15" fill="#e2e2f4"/><text x="2471" y="1267.55" font-size="19.5" fill="#1c1f73" text-anchor="middle">N</text></svg>
</body></html>
